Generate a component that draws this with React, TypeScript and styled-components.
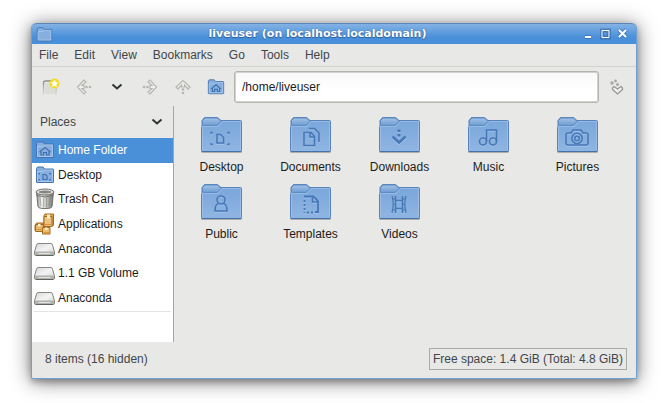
import React from "react";
import styled, { createGlobalStyle } from "styled-components";

const GlobalStyle = createGlobalStyle`
  * { box-sizing: border-box; }
  body {
    margin: 0;
    background: #fff;
    color: #1c1c1c;
    font: 12px/16px "Liberation Sans", Arial, sans-serif;
  }
  button, input { font: inherit; color: inherit; }
  svg { display: block; flex: none; }
`;

const Desktop = styled.div`
  display: flex;
  min-height: 100vh;
  padding: 23px 33px 24px 31px;
`;

const Window = styled.main`
  flex: 1;
  min-width: 0;
  display: flex;
  flex-direction: column;
  background: #e8e8e6;
  border: 1px solid #6d9fd8;
  border-top: 0;
  border-radius: 5px 5px 2px 2px;
  box-shadow: 0 2px 20px rgba(0, 0, 0, 0.55), 0 3px 6px rgba(0, 0, 0, 0.25);
`;

const TitleBar = styled.header`
  display: flex;
  align-items: center;
  height: 21px;
  padding: 0 6px 0 4px;
  border-top: 1px solid #5a86b8;
  border-radius: 5px 5px 0 0;
  background: linear-gradient(#84b2e4, #4a90d9 65%, #4a8fd9);
`;

const Title = styled.h1`
  flex: 1;
  margin: 0;
  text-align: center;
  color: #fff;
  font: bold 11px/18px "DejaVu Sans", sans-serif;
  text-shadow: 0 0 1px #2c5e98, 0 1px 1px #2c5e98;
`;

const WindowControls = styled.div`
  display: flex;
  gap: 3px;
`;

const PlainButton = styled.button`
  display: flex;
  align-items: center;
  justify-content: center;
  padding: 0;
  border: 0;
  background: none;
`;

const ControlButton = styled(PlainButton)`
  width: 14px;
  height: 16px;
`;

const MenuBar = styled.nav`
  display: flex;
  gap: 16px;
  height: 23px;
  padding: 0 7px;
  border-bottom: 1px solid #d3d3d0;
`;

const MenuButton = styled(PlainButton)`
  color: #41464a;
`;

const Toolbar = styled.div`
  display: flex;
  align-items: center;
  height: 39px;
  padding: 0 7px;
`;

const ToolButton = styled(PlainButton)`
  width: 24px;
  height: 24px;
`;

const ToolGroup = styled.div`
  display: flex;
  gap: 9px;
`;

const PathEntry = styled.input`
  flex: 1;
  min-width: 0;
  height: 32px;
  margin: 0 6px;
  padding: 0 7px;
  border: 1px solid #b4b4af;
  border-radius: 3px;
  outline: 0;
  background: linear-gradient(#f8f8f8, #fff 60%);
  box-shadow: inset 0 0 0 1px #d2d2ce;
`;

const Body = styled.div`
  flex: 1;
  display: flex;
`;

const Sidebar = styled.aside`
  width: 142px;
  display: flex;
  flex-direction: column;
  border-right: 1px solid #a5a5a2;
  background: #fff;
`;

const PlacesHeader = styled(PlainButton)`
  justify-content: space-between;
  height: 32px;
  padding: 0 10px 0 8px;
  background: #e8e8e6;
  color: #41464a;
`;

const PlacesList = styled.ul`
  display: grid;
  grid-template-rows: repeat(7, 1fr);
  height: 172px;
  margin: 0;
  padding: 0;
  list-style: none;
`;

const Place = styled.a<{ $active?: boolean }>`
  display: flex;
  align-items: center;
  gap: 3px;
  height: 100%;
  padding: 0 2px;
  text-decoration: none;
  color: ${(p) => (p.$active ? "#fff" : "#1c1c1c")};
  background: ${(p) => (p.$active ? "#4a90d9" : "transparent")};
`;

const PlaceIcon = styled.span`
  display: flex;
  justify-content: center;
  width: 21px;
`;

const Divider = styled.hr`
  width: calc(100% - 4px);
  margin: 1px 2px;
  border: 0;
  border-top: 1px solid #e4e4e4;
`;

const FileGrid = styled.section`
  flex: 1;
  display: grid;
  grid-template-columns: repeat(auto-fill, 89px);
  grid-auto-rows: 67px;
  align-content: start;
  padding: 10px 0 0 3px;
`;

const FileButton = styled(PlainButton)`
  flex-direction: column;
  justify-content: flex-start;
`;

const FileLabel = styled.span`
  margin-top: 5px;
`;

const StatusBar = styled.footer`
  display: flex;
  align-items: center;
  justify-content: space-between;
  height: 36px;
  padding: 0 9px 3px 13px;
  color: #41464a;
`;

const FreeSpace = styled.span`
  padding: 2px 3px;
  border: 1px solid #aaaaa7;
`;

const glyphs: Record<string, React.ReactNode> = {
  desktop: (
    <>
      <path d="M11 18v-1.500h2M27 16.500h2V18M11 27v1.500h2M27 28.500h2V27" strokeWidth="1.400" />
      <path d="M17 18.500h3.500l3 3V27H17z" />
    </>
  ),
  documents: (
    <>
      <path d="M15 16.500h7l3.500 4v9H15z" />
      <path d="M21 16.500v4.500h4" />
      <path d="M19.500 12.500h6l4.500 4.500V26" />
    </>
  ),
  downloads: (
    <>
      <path d="m14.500 20.500 6.500 6 6.500-6" strokeWidth="2.400" />
      <path d="M21 13.500V16M21 18v2.500" strokeWidth="3" />
    </>
  ),
  music: (
    <>
      <circle cx="16" cy="25.500" r="3.500" />
      <circle cx="26" cy="25.500" r="3.500" />
      <path d="M19.500 25.500v-11.500h10v11.500" />
    </>
  ),
  pictures: (
    <>
      <path d="M15 17l2-3h8l2 3h3q2 0 2 2v8q0 2-2 2H12q-2 0-2-2v-8q0-2 2-2z" />
      <circle cx="21" cy="22.500" r="5.200" />
      <circle cx="21" cy="22.500" r="2.300" />
    </>
  ),
  public: (
    <>
      <circle cx="21" cy="17" r="4" />
      <path d="M18.500 20.500q-3.500 1-3.500 7.500h12q0-6.500-3.500-7.500" />
    </>
  ),
  templates: (
    <>
      <path d="M15 13.500h9.500l4.500 4.500v11h-3" strokeWidth="1.800" />
      <path d="M23.500 14v5H29" />
      <path d="M15.500 17v13M18 29.500h8" strokeDasharray="2 2" strokeWidth="1.800" />
    </>
  ),
  videos: (
    <>
      <path d="M14 13c1.500 5 1.500 11 0 17M28 13c-1.500 5-1.500 11 0 17" strokeWidth="1.300" />
      <path d="M17.500 13v17M24.500 13v17" />
      <path d="M18 17.500h6M18 25.500h6" />
      <path d="M15 16h2M15 21.500h2M15 27h2M25 16h2M25 21.500h2M25 27h2" strokeWidth="1.200" />
    </>
  ),
};

function FolderIcon({ glyph }: { glyph: string }) {
  return (
    <svg width="43" height="38" viewBox="0 0 43 38" aria-hidden="true">
      <defs>
        <linearGradient id="folderFace" x1="0" y1="0" x2="0" y2="1">
          <stop offset="0" stopColor="#78a5da" />
          <stop offset="1" stopColor="#8fb5e2" />
        </linearGradient>
        <linearGradient id="folderTab" x1="0" y1="0" x2="0" y2="1">
          <stop offset="0" stopColor="#a5c3e6" />
          <stop offset="1" stopColor="#6c9cd2" />
        </linearGradient>
      </defs>
      <rect x="1" y="34" width="41" height="3" rx="1.500" fill="#000" opacity=".25" />
      <path d="M2 10V4.500L4.500 1.500h13L21 4.500h19.500q1 0 1 1v29q0 1-1 1h-38q-1 0-1-1V12z" fill="url(#folderFace)" stroke="#5883ba" />
      <path d="M2.500 34V10.500h15.500L22.500 5.500h18V34" fill="none" stroke="#a9c8ec" opacity=".6" />
      <path d="M2.500 9V4.500L5 2h12.500l3.500 3.500-4 4H4z" fill="url(#folderTab)" stroke="#5d8bc3" />
      <path d="M2 35.500h39" stroke="#4471aa" />
      <g fill="none" stroke="#b1cff0" strokeWidth="1.400" transform="translate(0 1)" opacity=".6">{glyphs[glyph]}</g>
      <g fill="none" stroke="#4677b7" strokeWidth="1.600">{glyphs[glyph]}</g>
    </svg>
  );
}

function SmallFolder({ kind, size = 20 }: { kind?: "home" | "desktop"; size?: number }) {
  return (
    <svg width={size} height={size} viewBox="0 0 20 20" aria-hidden="true">
      <path d="M1.500 17V3.500L2.500 2h5.500l1.500 2h8.500q.5 0 .5.500V17q0 .5-.5.500H2q-.5 0-.5-.5z" fill="#86afe0" stroke="#4473ad" />
      <path d="M2.500 16.500V6.500h6l1.500-1.500h7.500v11.500z" fill="none" stroke="#b3cff0" opacity=".7" />
      {kind === "home" && (
        <path d="m4.500 12 5.500-4.500 5.500 4.500M6 11.500V15h2.500v-2.500h3V15H14v-3.500" fill="none" stroke="#4070ae" strokeWidth="1.200" />
      )}
      {kind === "desktop" && (
        <path d="M4 9.500V8.500h1M14 8.500h1.500v1M4 14v1h1M14 15h1.500v-1M8 9.500h2.500l1.500 1.500v3.500H8z" fill="none" stroke="#4070ae" strokeWidth="1.200" />
      )}
    </svg>
  );
}

function TrashIcon() {
  return (
    <svg width="20" height="22" viewBox="0 0 20 22" aria-hidden="true">
      <defs>
        <linearGradient id="can">
          <stop offset="0" stopColor="#8a8a87" />
          <stop offset=".3" stopColor="#f2f2f0" />
          <stop offset=".65" stopColor="#b5b5b2" />
          <stop offset="1" stopColor="#777774" />
        </linearGradient>
      </defs>
      <path d="M1.500 4l1.500 14.500q0 2 7 2t7-2L18.500 4z" fill="url(#can)" stroke="#70706d" />
      <path d="M5 9l1 9M8.500 10v9M11.500 10v9M15 9l-1 9" stroke="#70706d" opacity=".45" />
      <ellipse cx="10" cy="4" rx="9" ry="3" fill="#dededb" stroke="#70706d" />
      <ellipse cx="10" cy="4" rx="6.500" ry="1.500" fill="#858581" />
      <path d="M2 7.500q8 3 16 0" fill="none" stroke="#73736f" />
    </svg>
  );
}

function AppsIcon() {
  return (
    <svg width="21" height="22" viewBox="0 0 21 22" aria-hidden="true">
      <g stroke="#a06a20" fill="#e2a654">
        <path d="M10 2.500 11 1h8.500v11l-1.500 1.500h-8z" />
        <path d="M10 3.500h8v10h-8z" fill="#efc280" />
        <path d="M1 12.500 2.500 10h7v7.500H1z" />
        <path d="M1.500 11.500h8v7h-8z" fill="#e9b567" />
        <path d="M8.500 14.500h7.500v6.500H8.500z" fill="#efbd72" />
      </g>
      <path d="M13 1.500h3v4h-3zM4 11h2.500v2.500H4zM11 14.500h2.500v2.500H11z" fill="#fff0ce" />
      <path d="M2.500 16.500h6M11 11.500h6M9.500 19.500h6" stroke="#d4943f" />
    </svg>
  );
}

function DriveIcon() {
  return (
    <svg width="21" height="16" viewBox="0 0 21 16" aria-hidden="true">
      <defs>
        <linearGradient id="driveTop" x1="0" y1="0" x2="1" y2="1">
          <stop offset="0" stopColor="#d6d6d5" />
          <stop offset=".5" stopColor="#f4f4f4" />
          <stop offset="1" stopColor="#cfcfcd" />
        </linearGradient>
      </defs>
      <path d="M4 2.500h13q1 0 1.500 1.500l2 7v2q0 1.500-1.500 1.500H2Q.5 14.500.5 13v-2l2-7Q3 2.500 4 2.500z" fill="url(#driveTop)" stroke="#858780" />
      <path d="M1 11.500q0-1 1-1h17q1 0 1 1V14H1z" fill="#b0b2ad" />
      <path d="M4.500 12.500h12" stroke="#e4e4e2" />
      <path d="M2 14.500h17" stroke="#62645e" />
    </svg>
  );
}

function ArrowIcon({ angle }: { angle: number }) {
  return (
    <svg width="16" height="16" viewBox="0 0 16 16" aria-hidden="true">
      <g transform={`rotate(${angle} 8 8)`} fill="none">
        <path d="M8 1 1.500 8 8 15l2-2-4-3.500h2V6.500H6L10 3z" fill="#efefed" stroke="#b5b5b2" strokeWidth="1.200" />
        <circle cx="10.500" cy="8" r="1.300" fill="#b5b5b2" />
        <circle cx="14" cy="8" r="1.300" fill="#b5b5b2" />
      </g>
    </svg>
  );
}

function ChevronIcon() {
  return (
    <svg width="12" height="8" viewBox="0 0 12 8" aria-hidden="true">
      <path d="m1.500 1.500 4.500 4 4.500-4" fill="none" stroke="#2e3436" strokeWidth="2" />
    </svg>
  );
}

function NewTabIcon() {
  return (
    <svg width="18" height="18" viewBox="0 0 18 18" aria-hidden="true">
      <defs>
        <linearGradient id="pageFade" x1="0" y1="0" x2="0" y2="1">
          <stop offset="0" stopColor="#8c8c88" />
          <stop offset="1" stopColor="#999995" stopOpacity=".2" />
        </linearGradient>
      </defs>
      <path d="M1.500 17V5Q1.500 3 3.500 3H12q2 0 2 2v12" fill="none" stroke="url(#pageFade)" strokeWidth="1.300" />
      <path d="M3 5h11v11H3z" fill="#d9d9d2" opacity=".7" />
      <circle cx="12.500" cy="5.500" r="5" fill="#f3dc20" />
      <path d="m12.500 1.500 1.300 2.500 2.700.4-2 1.900.5 2.700-2.500-1.300L10 9l.5-2.700-2-1.900 2.700-.4z" fill="#fffef0" />
    </svg>
  );
}

function GoIcon() {
  return (
    <svg width="16" height="16" viewBox="0 0 16 16" aria-hidden="true">
      <g fill="#a8a8a5">
        <circle cx="3" cy="4" r="1.700" />
        <circle cx="6.500" cy="2" r="1.400" />
        <circle cx="8.500" cy="5.500" r="1.500" />
      </g>
      <path d="M3.500 9 5 7.500 8.500 10 12 7.500 13.500 9v1.500l-5 4.500-5-4.500z" fill="#efefed" stroke="#969693" strokeWidth="1.300" />
    </svg>
  );
}

function ControlIcon({ d, width = 2 }: { d: string; width?: number }) {
  return (
    <svg width="14" height="16" viewBox="0 0 14 16" aria-hidden="true">
      <path d={d} fill="none" stroke="#2f649f" strokeWidth="4" opacity=".55" />
      <path d={d} fill="none" stroke="#fff" strokeWidth={width} />
    </svg>
  );
}

const menus = ["File", "Edit", "View", "Bookmarks", "Go", "Tools", "Help"];
const places = [
  { label: "Home Folder", icon: <SmallFolder kind="home" />, active: true },
  { label: "Desktop", icon: <SmallFolder kind="desktop" /> },
  { label: "Trash Can", icon: <TrashIcon /> },
  { label: "Applications", icon: <AppsIcon /> },
  { label: "Anaconda", icon: <DriveIcon /> },
  { label: "1.1 GB Volume", icon: <DriveIcon /> },
  { label: "Anaconda", icon: <DriveIcon /> },
];
const tools = [
  { label: "New tab", icon: <NewTabIcon /> },
  { label: "Back", icon: <ArrowIcon angle={0} /> },
  { label: "History", icon: <ChevronIcon /> },
  { label: "Forward", icon: <ArrowIcon angle={180} /> },
  { label: "Up", icon: <ArrowIcon angle={90} /> },
  { label: "Home", icon: <SmallFolder kind="home" size={18} /> },
];
const files = ["Desktop", "Documents", "Downloads", "Music", "Pictures", "Public", "Templates", "Videos"];

export default function App() {
  return (
    <>
      <GlobalStyle />
      <Desktop>
        <Window>
          <TitleBar>
            <SmallFolder size={17} />
            <Title>liveuser (on localhost.localdomain)</Title>
            <WindowControls>
              <ControlButton aria-label="Minimize"><ControlIcon d="M3 11h6" /></ControlButton>
              <ControlButton aria-label="Maximize"><ControlIcon d="M3 4.500h7v7H3z" width={1} /></ControlButton>
              <ControlButton aria-label="Close"><ControlIcon d="m3 4 7 7M10 4l-7 7" /></ControlButton>
            </WindowControls>
          </TitleBar>
          <MenuBar>
            {menus.map((m) => <MenuButton key={m}>{m}</MenuButton>)}
          </MenuBar>
          <Toolbar>
            <ToolGroup>
              {tools.map((t) => (
                <ToolButton key={t.label} aria-label={t.label}>{t.icon}</ToolButton>
              ))}
            </ToolGroup>
            <PathEntry aria-label="Location" defaultValue="/home/liveuser" />
            <ToolButton aria-label="Go to location"><GoIcon /></ToolButton>
          </Toolbar>
          <Body>
            <Sidebar>
              <PlacesHeader>Places<ChevronIcon /></PlacesHeader>
              <PlacesList>
                {places.map((p, i) => (
                  <li key={i}>
                    <Place href="#" $active={p.active}>
                      <PlaceIcon>{p.icon}</PlaceIcon>
                      {p.label}
                    </Place>
                  </li>
                ))}
              </PlacesList>
              <Divider />
            </Sidebar>
            <FileGrid aria-label="Files">
              {files.map((f) => (
                <FileButton key={f}>
                  <FolderIcon glyph={f.toLowerCase()} />
                  <FileLabel>{f}</FileLabel>
                </FileButton>
              ))}
            </FileGrid>
          </Body>
          <StatusBar>
            <span>8 items (16 hidden)</span>
            <FreeSpace>Free space: 1.4 GiB (Total: 4.8 GiB)</FreeSpace>
          </StatusBar>
        </Window>
      </Desktop>
    </>
  );
}
